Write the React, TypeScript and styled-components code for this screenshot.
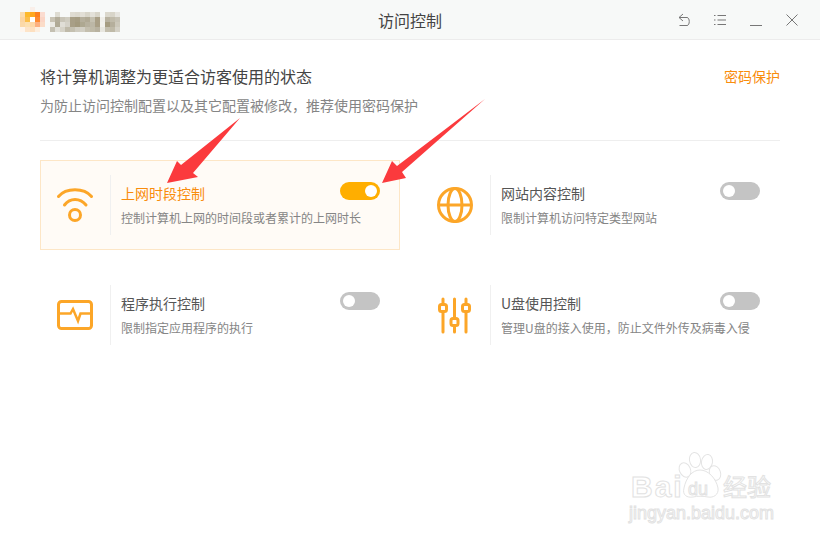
import React from "react";
import styled, { createGlobalStyle } from "styled-components";

const GlobalStyle = createGlobalStyle`
  html, body {
    margin: 0;
    padding: 0;
    background: #fff;
  }
  body {
    font-family: "Noto Sans CJK SC", "Noto Sans", "Liberation Sans", sans-serif;
  }
`;

const Page = styled.div`
  position: relative;
  width: 820px;
  height: 540px;
  overflow: hidden;
  background: #fff;
`;

const TitleBar = styled.header`
  box-sizing: border-box;
  height: 40px;
  display: grid;
  grid-template-columns: 1fr auto 1fr;
  align-items: center;
  background: #f7f9f8;
  border-bottom: 1px solid #ececec;
`;

const Brand = styled.div`
  display: flex;
  padding-left: 20px;
`;

const WindowTitle = styled.h1`
  margin: 0;
  font-size: 16px;
  font-weight: 400;
  color: #444;
`;

const WindowControls = styled.div`
  display: flex;
  justify-content: flex-end;
  gap: 24px;
  padding-right: 22px;
`;

const ControlIcon = styled.svg`
  width: 12px;
  height: 14px;
  fill: none;
  stroke: #777;
  stroke-width: 1;
`;

const Content = styled.main`
  padding: 24px 40px 0;
`;

const Intro = styled.section`
  display: flex;
  justify-content: space-between;
  height: 76px;
  border-bottom: 1px solid #eee;
`;

const Heading = styled.h2`
  margin: 0;
  font-size: 16px;
  line-height: 24px;
  font-weight: 400;
  color: #444;
`;

const SubHeading = styled.p`
  margin: 7px 0 0;
  font-size: 14px;
  line-height: 20px;
  color: #858585;
`;

const PasswordLink = styled.a`
  font-size: 14px;
  line-height: 24px;
  color: #f98c0c;
`;

const CardGrid = styled.section`
  display: grid;
  grid-template-columns: 360px 360px;
  grid-auto-rows: 90px;
  gap: 20px;
  margin-top: 19px;
`;

const Card = styled.article<{ $active?: boolean }>`
  box-sizing: border-box;
  display: flex;
  align-items: center;
  border: 1px solid ${({ $active }) => ($active ? "#fde6c6" : "transparent")};
  background: ${({ $active }) => ($active ? "#fffbf6" : "#fff")};
`;

const IconCell = styled.div`
  box-sizing: border-box;
  flex: 0 0 69px;
  display: flex;
  justify-content: center;
  padding-right: 1px;
`;

const CardIcon = styled.svg`
  width: 40px;
  height: 40px;
  fill: none;
  stroke: #fca628;
  stroke-width: 3;
`;

const CardBody = styled.div`
  box-sizing: border-box;
  flex: 1;
  height: 60px;
  padding: 7px 19px 0 10px;
  border-left: 1px solid #f0f0f0;
`;

const CardHead = styled.div`
  display: flex;
  justify-content: space-between;
  align-items: center;
  height: 18px;
`;

const CardTitle = styled.h3<{ $active?: boolean }>`
  margin: 0;
  padding-top: 4px;
  font-size: 14px;
  font-weight: 400;
  color: ${({ $active }) => ($active ? "#f98c0c" : "#555")};
`;

const CardText = styled.p`
  margin: 10px 0 0;
  font-size: 12px;
  line-height: 16px;
  white-space: nowrap;
  color: #858585;
`;

const Toggle = styled.span<{ $on?: boolean }>`
  box-sizing: border-box;
  display: flex;
  justify-content: ${({ $on }) => ($on ? "flex-end" : "flex-start")};
  align-items: center;
  width: 40px;
  height: 18px;
  padding: 0 3px;
  border-radius: 9px;
  background: ${({ $on }) => ($on ? "#ffae00" : "#c4c4c4")};

  &::after {
    content: "";
    width: 12px;
    height: 12px;
    border-radius: 50%;
    background: #fff;
  }
`;

const ArrowLayer = styled.svg`
  position: absolute;
  left: 0;
  top: 0;
  width: 820px;
  height: 540px;
  pointer-events: none;
`;

const Watermark = styled.div`
  position: absolute;
  left: 628px;
  top: 452px;
  width: 160px;
  height: 76px;
  color: #fff;
  -webkit-text-stroke: 1px #e2e2e2;
  font-family: "Liberation Sans", sans-serif;
`;

const WatermarkPaw = styled.svg`
  position: absolute;
  left: 50px;
  top: 0;
  width: 50px;
  height: 50px;
  fill: #fff;
  stroke: #e4e4e4;
  stroke-width: 1;
`;

const WatermarkBrand = styled.span`
  position: absolute;
  left: 3px;
  top: 20px;
  font-size: 30px;
  font-weight: 700;
  line-height: 30px;
  letter-spacing: 2px;
`;

const WatermarkDu = styled.span`
  position: absolute;
  left: 60px;
  top: 28px;
  font-size: 18px;
  line-height: 18px;
`;

const WatermarkCn = styled.span`
  position: absolute;
  left: 95px;
  top: 20px;
  font-family: "Noto Sans CJK SC", sans-serif;
  font-size: 24px;
  line-height: 28px;
`;

const WatermarkUrl = styled.span`
  position: absolute;
  left: 1px;
  top: 50px;
  font-size: 18px;
  line-height: 22px;
  white-space: nowrap;
`;

const logoCells = [
  ["#f7f9f8", "#f7f9f8", "#f9efe9", "#f7f9f8", "#f7f9f8"],
  ["#fbdcae", "#fdb92b", "#fea820", "#fd7f1f", "#fbdcd0"],
  ["#fcd5a0", "#fcbe4a", "#ffffff", "#fd8a30", "#fbd5c5"],
  ["#fcd9a8", "#fde0b0", "#fdd8a8", "#fcb080", "#fbdcc8"],
  ["#fef5ec", "#fde4c8", "#fde0c0", "#fdeede", "#f7f9f8"],
];

const bg = "#f7f9f8";
const nameCells = [
  [bg, "#dedcd2", bg, bg, "#dfdcd2", "#dcd9ce", "#e2dfd6", "#d8d5c9", "#e3e1d9", "#d8d5c9", bg, "#dbd8cd", "#d8d5c9", "#e6e5df"],
  ["#c8c3b4", "#b3ad9a", "#c9c5b8", "#d0cdc1", "#a89f86", "#a59c82", "#b5af9c", "#b0a994", "#c4c0b0", "#a99f86", "#f0efea", "#b8b2a0", "#c0bbaa", "#c6c2b4"],
  ["#ebeae4", "#b0aa96", "#e0ded6", "#d5d2c8", "#a89f86", "#a39a7e", "#aea891", "#b7b19e", "#bcb7a6", "#a99f86", "#f2f1ec", "#a69d82", "#b5af9c", "#ccc8ba"],
  ["#c4c0b2", "#e2e1da", "#d6d3c8", "#bfbaa9", "#c4c0b0", "#cfccc0", "#d2cfc4", "#c4bfae", "#bfbaa8", "#b8b2a0", "#e8e7e0", "#c4bfae", "#bfbaa8", "#d4d1c6"],
];

const BrandMosaic = () => (
  <svg width="100" height="25" viewBox="0 0 100 25">
    {logoCells.map((row, y) =>
      row.map((color, x) => (
        <rect key={`l${x}-${y}`} x={x * 5} y={y * 5} width="5" height="5" fill={color} />
      ))
    )}
    {nameCells.map((row, y) =>
      row.map((color, x) => (
        <rect key={`n${x}-${y}`} x={30 + x * 5} y={5 + y * 5} width="5" height="5" fill={color} />
      ))
    )}
  </svg>
);

const WifiIcon = () => (
  <CardIcon viewBox="0 0 40 40">
    <path d="M3.5 11.5C11 2.5 29 2.5 36.5 11.5" strokeLinecap="round" />
    <path d="M9.5 20C15 12.5 25 12.5 31 20" strokeLinecap="round" />
    <circle cx="20" cy="30" r="5.5" />
  </CardIcon>
);

const GlobeIcon = () => (
  <CardIcon viewBox="0 0 40 40">
    <circle cx="20" cy="20" r="16.5" />
    <ellipse cx="20" cy="20" rx="7" ry="16.5" />
    <path d="M3.5 20H36.5" />
  </CardIcon>
);

const MonitorIcon = () => (
  <CardIcon viewBox="0 0 40 40">
    <rect x="3.5" y="6.5" width="33" height="27" rx="3" />
    <path d="M3.5 18.5H15.5L18 14L23 26L25.5 18.5H36.5" strokeWidth="2.5" />
  </CardIcon>
);

const SlidersIcon = () => (
  <CardIcon viewBox="0 0 40 40">
    <path d="M8 4V9.5M8 16.5V37M19.5 4V23.5M19.5 30.5V37M31 4V9.5M31 16.5V37" strokeLinecap="round" />
    <rect x="4.5" y="9.5" width="7" height="7" rx="2" />
    <rect x="16" y="23.5" width="7" height="7" rx="2" />
    <rect x="27.5" y="9.5" width="7" height="7" rx="2" />
  </CardIcon>
);

const features = [
  { title: "上网时段控制", text: "控制计算机上网的时间段或者累计的上网时长", icon: <WifiIcon />, active: true },
  { title: "网站内容控制", text: "限制计算机访问特定类型网站", icon: <GlobeIcon /> },
  { title: "程序执行控制", text: "限制指定应用程序的执行", icon: <MonitorIcon /> },
  { title: "U盘使用控制", text: "管理U盘的接入使用，防止文件外传及病毒入侵", icon: <SlidersIcon /> },
];

export default function App() {
  return (
    <Page>
      <GlobalStyle />
      <TitleBar>
        <Brand>
          <BrandMosaic />
        </Brand>
        <WindowTitle>访问控制</WindowTitle>
        <WindowControls>
          <ControlIcon viewBox="0 0 12 14">
            <path d="M5 1L1 4.5L5 8M1 4.5H9C12 4.5 12 12.5 9 12.5H1.5" />
          </ControlIcon>
          <ControlIcon viewBox="0 0 12 14">
            <path d="M0 2.5H1.5M3.5 2.5H12M0 7H1.5M3.5 7H12M0 11.5H1.5M3.5 11.5H12" />
          </ControlIcon>
          <ControlIcon viewBox="0 0 12 14">
            <path d="M0 12.5H12" />
          </ControlIcon>
          <ControlIcon viewBox="0 0 12 14">
            <path d="M0.5 1.5L11.5 12.5M11.5 1.5L0.5 12.5" />
          </ControlIcon>
        </WindowControls>
      </TitleBar>
      <Content>
        <Intro>
          <div>
            <Heading>将计算机调整为更适合访客使用的状态</Heading>
            <SubHeading>为防止访问控制配置以及其它配置被修改，推荐使用密码保护</SubHeading>
          </div>
          <PasswordLink>密码保护</PasswordLink>
        </Intro>
        <CardGrid>
          {features.map((item) => (
            <Card key={item.title} $active={item.active}>
              <IconCell>{item.icon}</IconCell>
              <CardBody>
                <CardHead>
                  <CardTitle $active={item.active}>{item.title}</CardTitle>
                  <Toggle $on={item.active} />
                </CardHead>
                <CardText>{item.text}</CardText>
              </CardBody>
            </Card>
          ))}
        </CardGrid>
      </Content>
      <ArrowLayer viewBox="0 0 820 540">
        <polygon points="240,118 193,173 198,177 167,183 177,161 181,165" fill="#fb3a3d" />
        <polygon points="485,99 402,172 406,178 382,183 392,161 397,166" fill="#fb3a3d" />
      </ArrowLayer>
      <Watermark>
        <WatermarkBrand>Bai</WatermarkBrand>
        <WatermarkPaw viewBox="0 0 50 50">
          <ellipse cx="7" cy="18" rx="5.5" ry="7.5" transform="rotate(-25 7 18)" />
          <ellipse cx="17" cy="8" rx="5.5" ry="7.5" transform="rotate(-8 17 8)" />
          <ellipse cx="29" cy="10" rx="5.5" ry="7.5" transform="rotate(10 29 10)" />
          <ellipse cx="37" cy="21" rx="5.5" ry="7.5" transform="rotate(-20 37 21)" />
          <path d="M6 36C8 26 14 18 22 18C30 18 38 26 40 36C41 43 35 46 30 45C25 44 19 44 15 45C9 46 4 43 6 36Z" />
        </WatermarkPaw>
        <WatermarkDu>du</WatermarkDu>
        <WatermarkCn>经验</WatermarkCn>
        <WatermarkUrl>jingyan.baidu.com</WatermarkUrl>
      </Watermark>
    </Page>
  );
}
